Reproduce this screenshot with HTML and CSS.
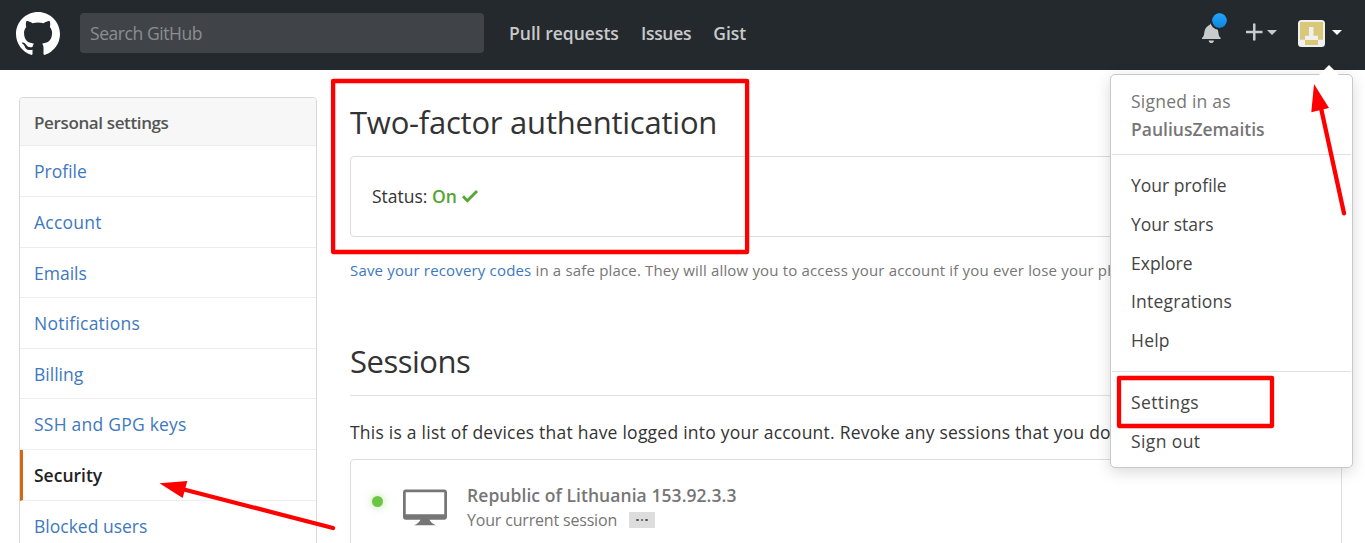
FILE: index.html
```html
<!DOCTYPE html>
<html lang="en">
<head>
<meta charset="utf-8">
<title>Security</title>
<link rel="stylesheet" href="styles.css">
</head>
<body>
<header class="topbar">
  <svg class="logo" viewBox="0 0 16 16"><path fill="#fff" fill-rule="evenodd" d="M8 0C3.58 0 0 3.58 0 8c0 3.54 2.29 6.53 5.47 7.59.4.07.55-.17.55-.38 0-.19-.01-.82-.01-1.49-2.01.37-2.53-.49-2.69-.94-.09-.23-.48-.94-.82-1.13-.28-.15-.68-.52-.01-.53.63-.01 1.08.58 1.23.82.72 1.21 1.87.87 2.33.66.07-.52.28-.87.51-1.07-1.78-.2-3.64-.89-3.64-3.95 0-.87.31-1.59.82-2.15-.08-.2-.36-1.02.08-2.12 0 0 .67-.21 2.2.82.64-.18 1.32-.27 2-.27s1.36.09 2 .27c1.53-1.04 2.2-.82 2.2-.82.44 1.1.16 1.92.08 2.12.51.56.82 1.27.82 2.15 0 3.07-1.87 3.75-3.65 3.95.29.25.54.73.54 1.48 0 1.07-.01 1.93-.01 2.2 0 .21.15.46.55.38A8.01 8.01 0 0 0 16 8c0-4.42-3.58-8-8-8z"/></svg>
  <div class="search">Search GitHub</div>
  <nav class="nav"><a>Pull requests</a><a class="tight">Issues</a><a>Gist</a></nav>
  <div class="tools">
    <div class="bell">
      <svg width="18.6" height="21" viewBox="0 0 14 16" preserveAspectRatio="none"><path fill="#c9cacb" d="M14 12v1H0v-1l.73-.58c.77-.77.81-2.55 1.19-4.42C2.69 3.23 6 2 6 2c0-.55.45-1 1-1s1 .45 1 1c0 0 3.39 1.23 4.16 5 .38 1.88.42 3.66 1.19 4.42l.66.58H14zm-7 4c1.11 0 2-.89 2-2H5c0 1.11.89 2 2 2z"/></svg>
      <i class="badge"></i>
    </div>
    <svg class="plus" width="31" height="18" viewBox="0 0 31 18"><path fill="#c9cacb" d="M7 0.500h2.500v7.200h7v2.500h-7v7.300H7v-7.300H0V7.700h7zM21 7h10l-5 5z"/></svg>
    <svg class="avatar" width="27" height="27" viewBox="0 0 27 27"><rect width="27" height="27" rx="3.5" fill="#f0f0f0"/><path fill="#d8c878" d="M2 2h23v17.700h-5v-4h-4.500V7H11v8.700H7v4H2zM7 20h13v5H7z"/></svg>
    <svg class="caret" width="10" height="5" viewBox="0 0 10 5"><path fill="#fff" d="M0 0h10L5 5z"/></svg>
  </div>
</header>
<div class="page">
  <aside class="sidebar">
    <h3>Personal settings</h3>
    <a>Profile</a>
    <a class="wide">Account</a>
    <a>Emails</a>
    <a class="wide">Notifications</a>
    <a>Billing</a>
    <a class="wide">SSH and GPG keys</a>
    <a class="current">Security</a>
    <a>Blocked users</a>
  </aside>
  <main class="main">
    <h2 class="title">Two-factor authentication</h2>
    <div class="status-box"><span>Status:</span><b>On</b><svg width="16" height="16" viewBox="0 2 12 12"><path fill="#55a532" d="M12 5l-8 8-4-4 1.500-1.500L4 10l6.500-6.500z"/></svg></div>
    <p class="note"><a>Save your recovery codes</a> in a safe place. They will allow you to access your account if you ever lose your ph</p>
    <h2 class="title sessions">Sessions</h2>
    <p class="intro">This is a list of devices that have logged into your account. Revoke any sessions that you do</p>
    <div class="session">
      <i class="dot"></i>
      <svg class="device" width="44" height="44" viewBox="0 0 16 16"><path fill="#767676" d="M15 2H1c-.55 0-1 .45-1 1v9c0 .55.45 1 1 1h5.340c-.25.61-.86 1.390-2.340 2h8c-1.480-.61-2.090-1.390-2.340-2H15c.55 0 1-.45 1-1V3c0-.55-.45-1-1-1zm0 9H1V3h14v8z"/></svg>
      <div class="session-text">
        <b>Republic of Lithuania 153.92.3.3</b>
        <div class="session-sub"><span>Your current session</span><i class="more"><i></i><i></i><i></i></i></div>
      </div>
    </div>
  </main>
</div>
<div class="menu">
  <svg class="notch" width="20" height="11" viewBox="0 0 20 11"><path fill="#fff" d="M0 10L10 0l10 10v1H0z"/></svg>
  <div class="signed"><span class="wide">Signed in as</span><b>PauliusZemaitis</b></div>
  <div class="group"><a>Your profile</a><a>Your stars</a><a>Explore</a><a class="wide">Integrations</a><a class="wide">Help</a></div>
  <div class="group last"><a class="wider">Settings</a><a class="wider">Sign out</a></div>
</div>
<svg class="marks" width="1365" height="543" viewBox="0 0 1365 543">
  <g fill="none" stroke="#f00" stroke-width="4.300" stroke-linejoin="round" stroke-linecap="round">
    <rect x="333.100" y="81" width="414" height="171"/>
    <rect x="1119" y="378" width="153" height="48"/>
    <path d="M1321 108L1344 213.300M184 489.500L333 528"/>
  </g>
  <path fill="#f00" d="M1314 84L1329 108L1311.300 112.300zM159.500 483.300L187.300 481L182.700 498z"/>
</svg>
</body>
</html>
```
FILE: styles.css
```css
* { box-sizing: border-box; }
body { margin: 0; width: 1365px; height: 543px; overflow: hidden; position: relative; background: #fff; color: #333; font: 17.5px/26px "Open Sans", "Noto Sans", sans-serif; }
span, a, b { white-space: pre; }
h2, h3, p { margin: 0; font-weight: 400; }
svg { display: block; flex: none; }
.topbar { height: 70px; background: #24292e; display: flex; align-items: flex-start; }
.logo { width: 44px; height: 44px; margin: 12px 0 0 16px; }
.search { width: 404px; height: 40px; margin: 13px 0 0 20px; padding-left: 10px; border-radius: 4px; background: #404448; color: #8b8e91; line-height: 41px; letter-spacing: -.43px; }
.nav { display: flex; gap: 22px; margin: 20px 0 0 25px; color: #c8c9cb; font-weight: 600; }
.nav .tight { letter-spacing: -.3px; }
.tools { margin-left: auto; margin-right: 23px; display: flex; align-items: flex-start; }
.bell { position: relative; margin: 22px 25.500px 0 0; }
.badge { position: absolute; left: 8px; top: -11px; width: 19px; height: 19px; border: 2px solid #24292e; border-radius: 50%; background: linear-gradient(#21a5fc, #0e86db) padding-box; }
.plus { margin: 23px 21px 0 0; }
.avatar { margin: 20px 7px 0 0; }
.caret { margin-top: 30px; }
.page { display: flex; align-items: flex-start; height: 473px; overflow: hidden; padding: 27px 23px 0 19px; gap: 33px; }
.sidebar { width: 298px; height: 480px; border: 1px solid #d8d8d8; border-radius: 4px; flex: none; overflow: hidden; }
.sidebar h3 { height: 48.400px; padding-left: 14px; font-size: 17px; letter-spacing: -.37px; line-height: 50px; background: #f7f7f7; border-bottom: 1px solid #eee; font-weight: 600; color: #555; }
.sidebar a { display: block; height: 50.600px; padding-left: 14px; line-height: 51px; border-bottom: 1px solid #eee; color: #4078c0; }
.wide, .sidebar .wide { letter-spacing: .23px; }
.wider { letter-spacing: .4px; }
.sidebar a.current { color: #222; font-weight: 600; border-left: 3px solid #d26911; padding-left: 11px; }
.main { flex: 1; min-width: 0; }
.title { font-size: 31px; line-height: 40px; margin-top: 5px; font-weight: 400; letter-spacing: -.23px; }
.status-box { margin-top: 14px; height: 81px; border: 1px solid #ddd; border-radius: 4px; display: flex; align-items: center; padding: 0 0 1px 21px; gap: 4.500px; }
.status-box b { color: #55a532; font-weight: 600; margin-right: 1px; }
.note { margin-top: 20px; font-size: 15px; color: #767676; white-space: pre; overflow: hidden; letter-spacing: .17px; }
.note a { color: #4078c0; }
.sessions { margin-top: 58px; height: 55px; border-bottom: 1px solid #e1e1e1; letter-spacing: -.5px; }
.intro { margin-top: 23px; white-space: pre; overflow: hidden; letter-spacing: .235px; }
.session { margin-top: 14px; height: 100px; border: 1px solid #ddd; border-radius: 4px; display: flex; padding-left: 21px; color: #767676; }
.dot { width: 11px; height: 11px; margin: 36px 20px 0 0; border-radius: 50%; background: #6cc644; box-shadow: 0 0 8px rgba(108,198,68,.5); }
.device { margin: 24px 20px 0 0; }
.session-text { padding-top: 22px; }
.session-text b { display: block; font-weight: 600; letter-spacing: .06px; }
.session-sub { display: flex; align-items: center; font-size: 16px; line-height: 24px; gap: 12px; letter-spacing: -.18px; }
.more { width: 26px; height: 16px; background: #ddd; border-radius: 1px; display: flex; gap: 2px; justify-content: center; align-items: center; }
.more i { width: 2.500px; height: 2.500px; border-radius: 50%; background: #555; }
.menu { position: absolute; left: 1110px; top: 74px; width: 243px; height: 394px; background: #fff; border: 1px solid #c8c8c8; border-radius: 5px; box-shadow: 0 4px 15px rgba(0,0,0,.15); color: #444; }
.notch { position: absolute; left: 208px; top: -10px; }
.signed { height: 80px; padding: 12px 0 0 19px; margin: 0 1px; border-bottom: 1px solid #e1e1e1; color: #767676; line-height: 28px; display: flex; flex-direction: column; align-items: flex-start; }
.signed b { font-weight: 600; }
.group { margin: 0 1px; padding: 11px 0 11px 19px; border-bottom: 1px solid #e1e1e1; display: flex; flex-direction: column; align-items: flex-start; }
.group a { line-height: 38.800px; height: 38.800px; }
.group.last { border: 0; }
.marks { position: absolute; left: 0; top: 0; }
```
